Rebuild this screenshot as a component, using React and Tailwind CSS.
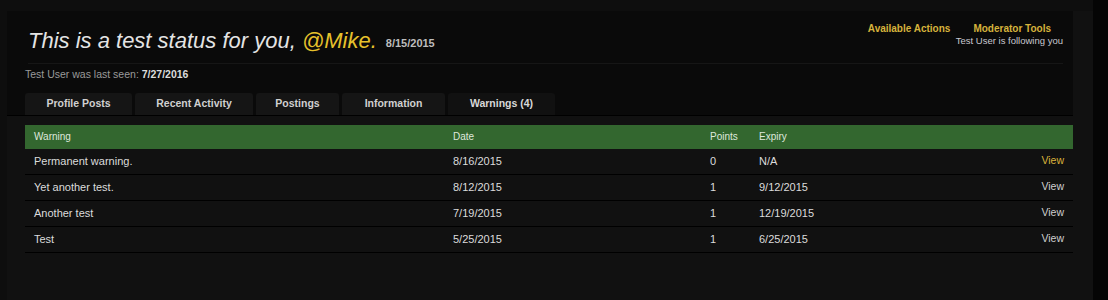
import React from 'react';

const tabs = [
  { label: 'Profile Posts', w: 'w-[107px]' },
  { label: 'Recent Activity', w: 'w-[118px]' },
  { label: 'Postings', w: 'w-[83px]' },
  { label: 'Information', w: 'w-[103px]' },
  { label: 'Warnings (4)', w: 'w-[107px]', active: true },
];

const warnings = [
  { title: 'Permanent warning.', date: '8/16/2015', points: 0, expiry: 'N/A', hot: true },
  { title: 'Yet another test.', date: '8/12/2015', points: 1, expiry: '9/12/2015' },
  { title: 'Another test', date: '7/19/2015', points: 1, expiry: '12/19/2015' },
  { title: 'Test', date: '5/25/2015', points: 1, expiry: '6/25/2015' },
];

export default function App() {
  return (
    <div className="flex h-[300px] w-full bg-[#0e0e0e] font-['Liberation_Sans',Arial,sans-serif] text-[#dcdcdc]">
      <div className="w-[1093px] pl-[7px] pt-[11px]">
        <div className="h-full bg-[#111111]">
          {/* Profile header */}
          <div className="mr-[20px] bg-[#0a0a0a]">
            <div className="ml-[21px] mr-[10px] flex justify-between border-b border-[#161616]">
              <div className="flex items-end pb-[9px] pt-[17px]">
                <h1 className="text-[22px] italic leading-[26px] text-[#e4e4e4]">
                  This is a test status for you, <span className="text-[#e6c12c]">@Mike.</span>
                </h1>
                <span className="mb-[3px] ml-[9px] text-[11px] font-bold text-[#bdbdbd]">8/15/2015</span>
              </div>
              <div className="pt-[11px] text-right">
                <div className="flex justify-end gap-[23px] pr-[12px] text-[10px] font-bold leading-[13px] text-[#d6b33c]">
                  <span>Available Actions</span>
                  <span>Moderator Tools</span>
                </div>
                <div className="text-[9.5px] leading-[12px] text-[#c8c8d0]">Test User is following you</div>
              </div>
            </div>
            <div className="pl-[18px] pt-[3px] text-[10.5px] text-[#9a9a9a]">
              Test User was last seen: <span className="font-bold text-[#dcdcdc]">7/27/2016</span>
            </div>
            <div className="flex gap-[3px] border-b border-[#000] pl-[18px] pt-[10px]">
              {tabs.map((t) => (
                <div
                  key={t.label}
                  className={`${t.w} flex h-[22px] items-center justify-center rounded-t-[3px] text-[10.5px] font-bold ${
                    t.active ? 'bg-[#111111] text-[#d8d8d8]' : 'bg-[#151515] text-[#d0d0d0]'
                  }`}
                >
                  {t.label}
                </div>
              ))}
            </div>
          </div>

          {/* Warnings table */}
          <div className="mr-[20px] pl-[18px] pt-[9px] text-[11px]">
            <div className="grid h-[24px] grid-cols-[419px_257px_49px_1fr_auto] items-center bg-[#33672f] px-[9px] text-[10px] text-[#dfe8dc]">
              <span>Warning</span>
              <span>Date</span>
              <span>Points</span>
              <span>Expiry</span>
              <span />
            </div>
            {warnings.map((w) => (
              <div
                key={w.title}
                className="grid h-[26px] grid-cols-[419px_257px_49px_1fr_auto] items-center border-b border-[#000] px-[9px]"
              >
                <span>{w.title}</span>
                <span>{w.date}</span>
                <span>{w.points}</span>
                <span>{w.expiry}</span>
                <span className={`text-[10.5px] ${w.hot ? 'text-[#d9b13b]' : 'text-[#cfcfcf]'}`}>View</span>
              </div>
            ))}
          </div>
        </div>
      </div>
      <div className="flex-1 bg-[#050505]" />
    </div>
  );
}
